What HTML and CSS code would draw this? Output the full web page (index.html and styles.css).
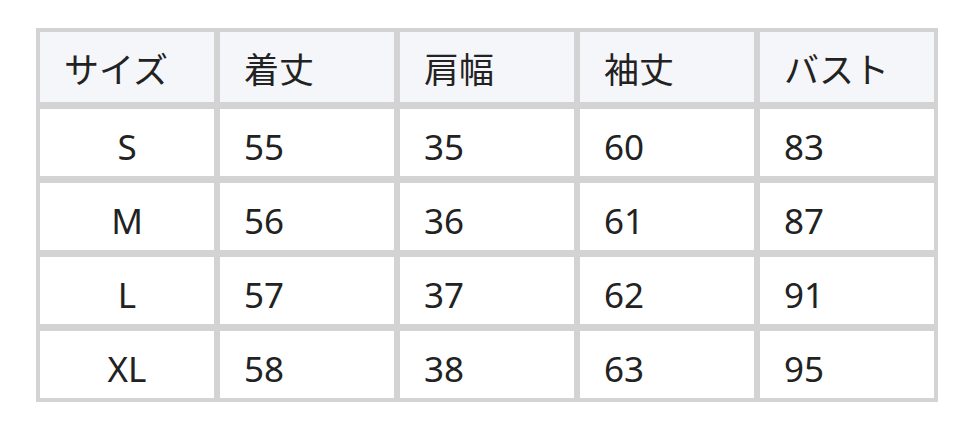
FILE: index.html
```html
<!DOCTYPE html>
<html lang="ja">
<head>
<meta charset="utf-8">
<link rel="stylesheet" href="styles.css">
</head>
<body>
<div class="size-table">
  <div class="cell head">サイズ</div>
  <div class="cell head">着丈</div>
  <div class="cell head">肩幅</div>
  <div class="cell head">袖丈</div>
  <div class="cell head">バスト</div>

  <div class="cell size">S</div>
  <div class="cell">55</div>
  <div class="cell">35</div>
  <div class="cell">60</div>
  <div class="cell">83</div>

  <div class="cell size">M</div>
  <div class="cell">56</div>
  <div class="cell">36</div>
  <div class="cell">61</div>
  <div class="cell">87</div>

  <div class="cell size">L</div>
  <div class="cell">57</div>
  <div class="cell">37</div>
  <div class="cell">62</div>
  <div class="cell">91</div>

  <div class="cell size">XL</div>
  <div class="cell">58</div>
  <div class="cell">38</div>
  <div class="cell">63</div>
  <div class="cell">95</div>
</div>
</body>
</html>
```
FILE: styles.css
```css
html, body {
  margin: 0;
  background: #ffffff;
}
body {
  padding: 28px 36px;
  font-family: "Noto Sans", "Noto Sans CJK JP", sans-serif;
  color: #222222;
}
.size-table {
  display: inline-grid;
  grid-template-columns: repeat(5, 174px);
  grid-template-rows: 70px repeat(4, 67px);
  gap: 7px 6px;
  padding: 4px;
  background: #d3d3d3;
}
.cell {
  background: #ffffff;
  display: flex;
  align-items: center;
  padding-left: 24px;
  padding-top: 7px;
  font-size: 35px;
  line-height: 1;
}
.cell.head {
  background: #f5f6fa;
  padding-top: 4px;
}
.cell.size {
  justify-content: center;
  padding-left: 0;
}
```
